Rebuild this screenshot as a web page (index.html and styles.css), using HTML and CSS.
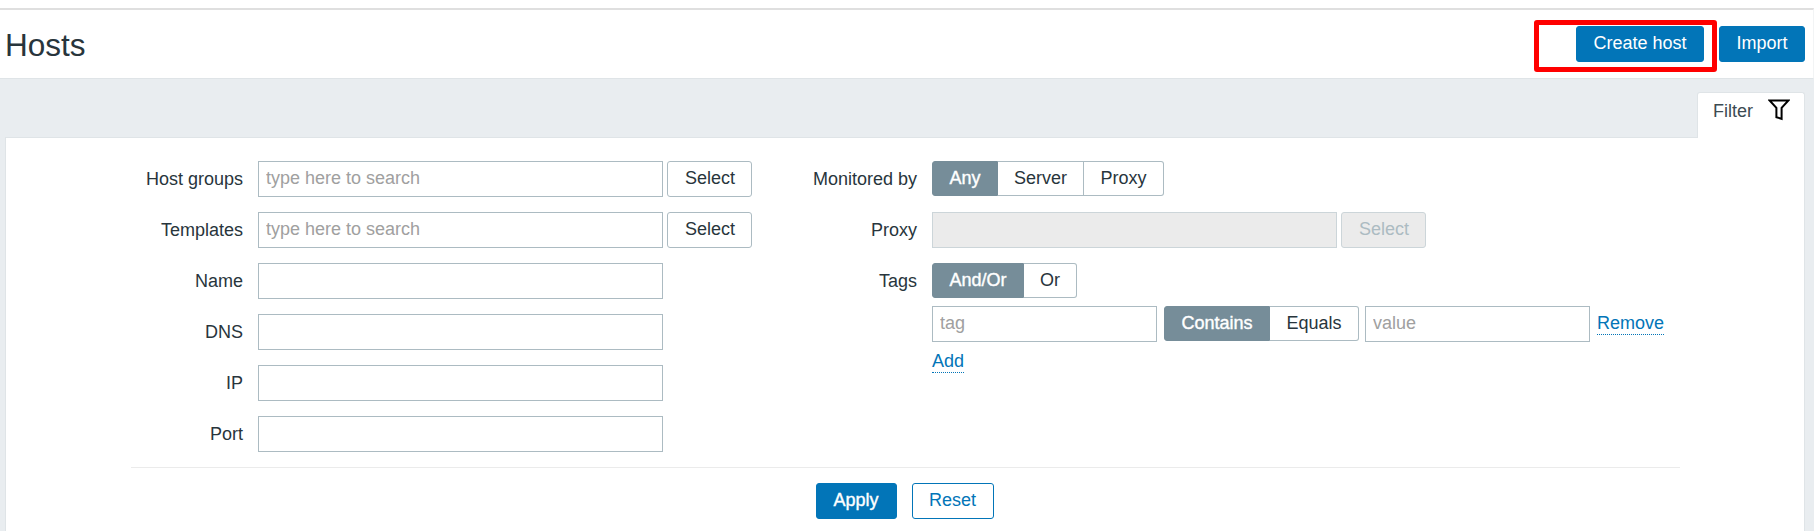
FILE: index.html
```
<!DOCTYPE html>
<html lang="en">
<head>
<meta charset="utf-8">
<title>Hosts</title>
<link rel="stylesheet" href="styles.css">
</head>
<body>
<div class="page">
  <header class="header">
    <h1 class="title">Hosts</h1>
    <div class="actions">
      <div class="create-wrap"><button class="btn primary create">Create host</button><span class="highlight"></span></div>
      <button class="btn primary import">Import</button>
    </div>
  </header>
  <main class="content">
    <div class="tabs">
      <a class="tab">Filter
        <svg class="funnel" width="22" height="22" viewBox="0 0 22 22" fill="none" stroke="#000" stroke-width="2"><path d="M1.6 1.4h18.8L13.6 8.8v11L8.4 18.2V8.8z"/></svg>
      </a>
    </div>
    <section class="panel">
      <div class="columns">
        <div class="form left">
          <label class="label">Host groups</label>
          <div class="field"><input class="input wide" placeholder="type here to search"><button class="btn select">Select</button></div>
          <label class="label">Templates</label>
          <div class="field"><input class="input wide" placeholder="type here to search"><button class="btn select">Select</button></div>
          <label class="label">Name</label>
          <div class="field"><input class="input wide"></div>
          <label class="label">DNS</label>
          <div class="field"><input class="input wide"></div>
          <label class="label">IP</label>
          <div class="field"><input class="input wide"></div>
          <label class="label">Port</label>
          <div class="field"><input class="input wide"></div>
        </div>
        <div class="form right">
          <label class="label">Monitored by</label>
          <div class="field"><div class="segments monitored"><span class="seg on">Any</span><span class="seg">Server</span><span class="seg">Proxy</span></div></div>
          <label class="label">Proxy</label>
          <div class="field"><input class="input wide" disabled><button class="btn select" disabled>Select</button></div>
          <label class="label">Tags</label>
          <div class="tags">
            <div class="segments andor"><span class="seg on">And/Or</span><span class="seg">Or</span></div>
            <div class="tag-row">
              <input class="input tag" placeholder="tag">
              <div class="segments match"><span class="seg on">Contains</span><span class="seg">Equals</span></div>
              <input class="input tag" placeholder="value">
              <a class="link remove">Remove</a>
            </div>
            <a class="link add">Add</a>
          </div>
        </div>
      </div>
      <div class="footer">
        <button class="btn primary strong apply">Apply</button>
        <button class="btn outline">Reset</button>
      </div>
    </section>
  </main>
</div>
</body>
</html>
```
FILE: styles.css
```
* { box-sizing: border-box; }
body {
  margin: 0;
  height: 531px;
  overflow: hidden;
  background: #fff;
  color: #28353c;
  font: 18px/20px "Liberation Sans", Arial, sans-serif;
}
.page {
  height: 531px;
  padding-top: 8px;
  display: flex;
  flex-direction: column;
}
.header {
  height: 71px;
  border-top: 2px solid #dfdfdf;
  border-bottom: 1px solid #dfe4e7;
  border-right: 1px solid #f2f4f5;
  padding: 16px 8px 0 5px;
  display: flex;
  justify-content: space-between;
  align-items: flex-start;
}
.title {
  margin: 1px 0 0;
  font-size: 31.5px;
  line-height: 36px;
  font-weight: 400;
}
.actions { display: flex; gap: 15px; }
.create-wrap { position: relative; }
.highlight {
  position: absolute;
  left: -42px;
  top: -6px;
  width: 183px;
  height: 52px;
  border: 5px solid #f00;
  border-radius: 3px;
}
.btn {
  display: block;
  height: 36px;
  padding: 0 0 2px;
  border: 1px solid #acbbc2;
  border-radius: 3px;
  background: #fff;
  color: #28353c;
  font: inherit;
  line-height: 32px;
  text-align: center;
}
.primary { background: #0275b8; border-color: #0275b8; color: #fff; }
.strong { -webkit-text-stroke: 0.4px #fff; }
.outline { width: 82px; border-color: #0275b8; color: #0275b8; }
.create { width: 128px; }
.import { width: 86px; }
.select { width: 85px; padding-left: 1px; }
.apply { width: 81px; }
.select:disabled { background: #ebebeb; border-color: #ccd5d9; color: #acbbc2; }
.content {
  flex: 1;
  background: #e9edf0;
  padding: 13px 9px 0 5px;
  display: flex;
  flex-direction: column;
}
.tabs { display: flex; justify-content: flex-end; }
.tab {
  position: relative;
  z-index: 1;
  width: 108px;
  height: 46px;
  margin-bottom: -1px;
  padding: 6px 0 0 15px;
  display: flex;
  gap: 15px;
  align-items: flex-start;
  line-height: 24px;
  background: #fff;
  border: 1px solid #dfe4e7;
  border-bottom: 0;
  border-radius: 3px 3px 0 0;
  color: #3c4a52;
}
.funnel { display: block; }
.panel {
  flex: 1;
  background: #fff;
  border: 1px solid #dfe4e7;
  border-bottom: 0;
  padding: 23px 124px 0 125px;
}
.columns {
  display: flex;
  height: 307px;
  border-bottom: 1px solid #ebebeb;
}
.form {
  display: grid;
  column-gap: 15px;
  row-gap: 15px;
  align-content: start;
}
.left { grid-template-columns: 112px 494px; }
.right { grid-template-columns: 165px 1fr; }
.label {
  height: 36px;
  padding-top: 1px;
  line-height: 34px;
  text-align: right;
}
.field { display: flex; gap: 4px; align-items: flex-start; }
.input {
  display: block;
  height: 36px;
  margin: 0;
  padding: 0 7px 2px;
  border: 1px solid #acbbc2;
  border-radius: 0;
  background: #fff;
  font: inherit;
}
.input::placeholder { color: #a0a0a0; opacity: 1; }
.input:disabled { background: #ebebeb; border-color: #ccd5d9; }
.wide { width: 405px; }
.tag { width: 225px; }
.segments { display: grid; height: 35px; }
.monitored { grid-template-columns: 66px 86px 80px; }
.andor { grid-template-columns: 92px 53px; }
.match { grid-template-columns: 106px 89px; margin: 0 6px 0 7px; }
.seg {
  border: 1px solid #acbbc2;
  border-left: 0;
  background: #fff;
  line-height: 32px;
  text-align: center;
}
.seg:last-child { border-radius: 0 3px 3px 0; }
.on {
  background: #768d99;
  border: 1px solid #768d99;
  border-radius: 3px 0 0 3px;
  color: #fff;
  -webkit-text-stroke: 0.4px #fff;
}
.tags { display: flex; flex-direction: column; align-items: flex-start; }
.tag-row { display: flex; margin-top: 8px; }
.link {
  color: #0275b8;
  border-bottom: 1px dotted #0275b8;
}
.remove { height: 22px; margin: 7px 0 0 7px; }
.add { height: 22px; margin-top: 9px; }
.footer {
  display: flex;
  justify-content: center;
  gap: 15px;
  padding: 15px 2px 0 0;
}
```
